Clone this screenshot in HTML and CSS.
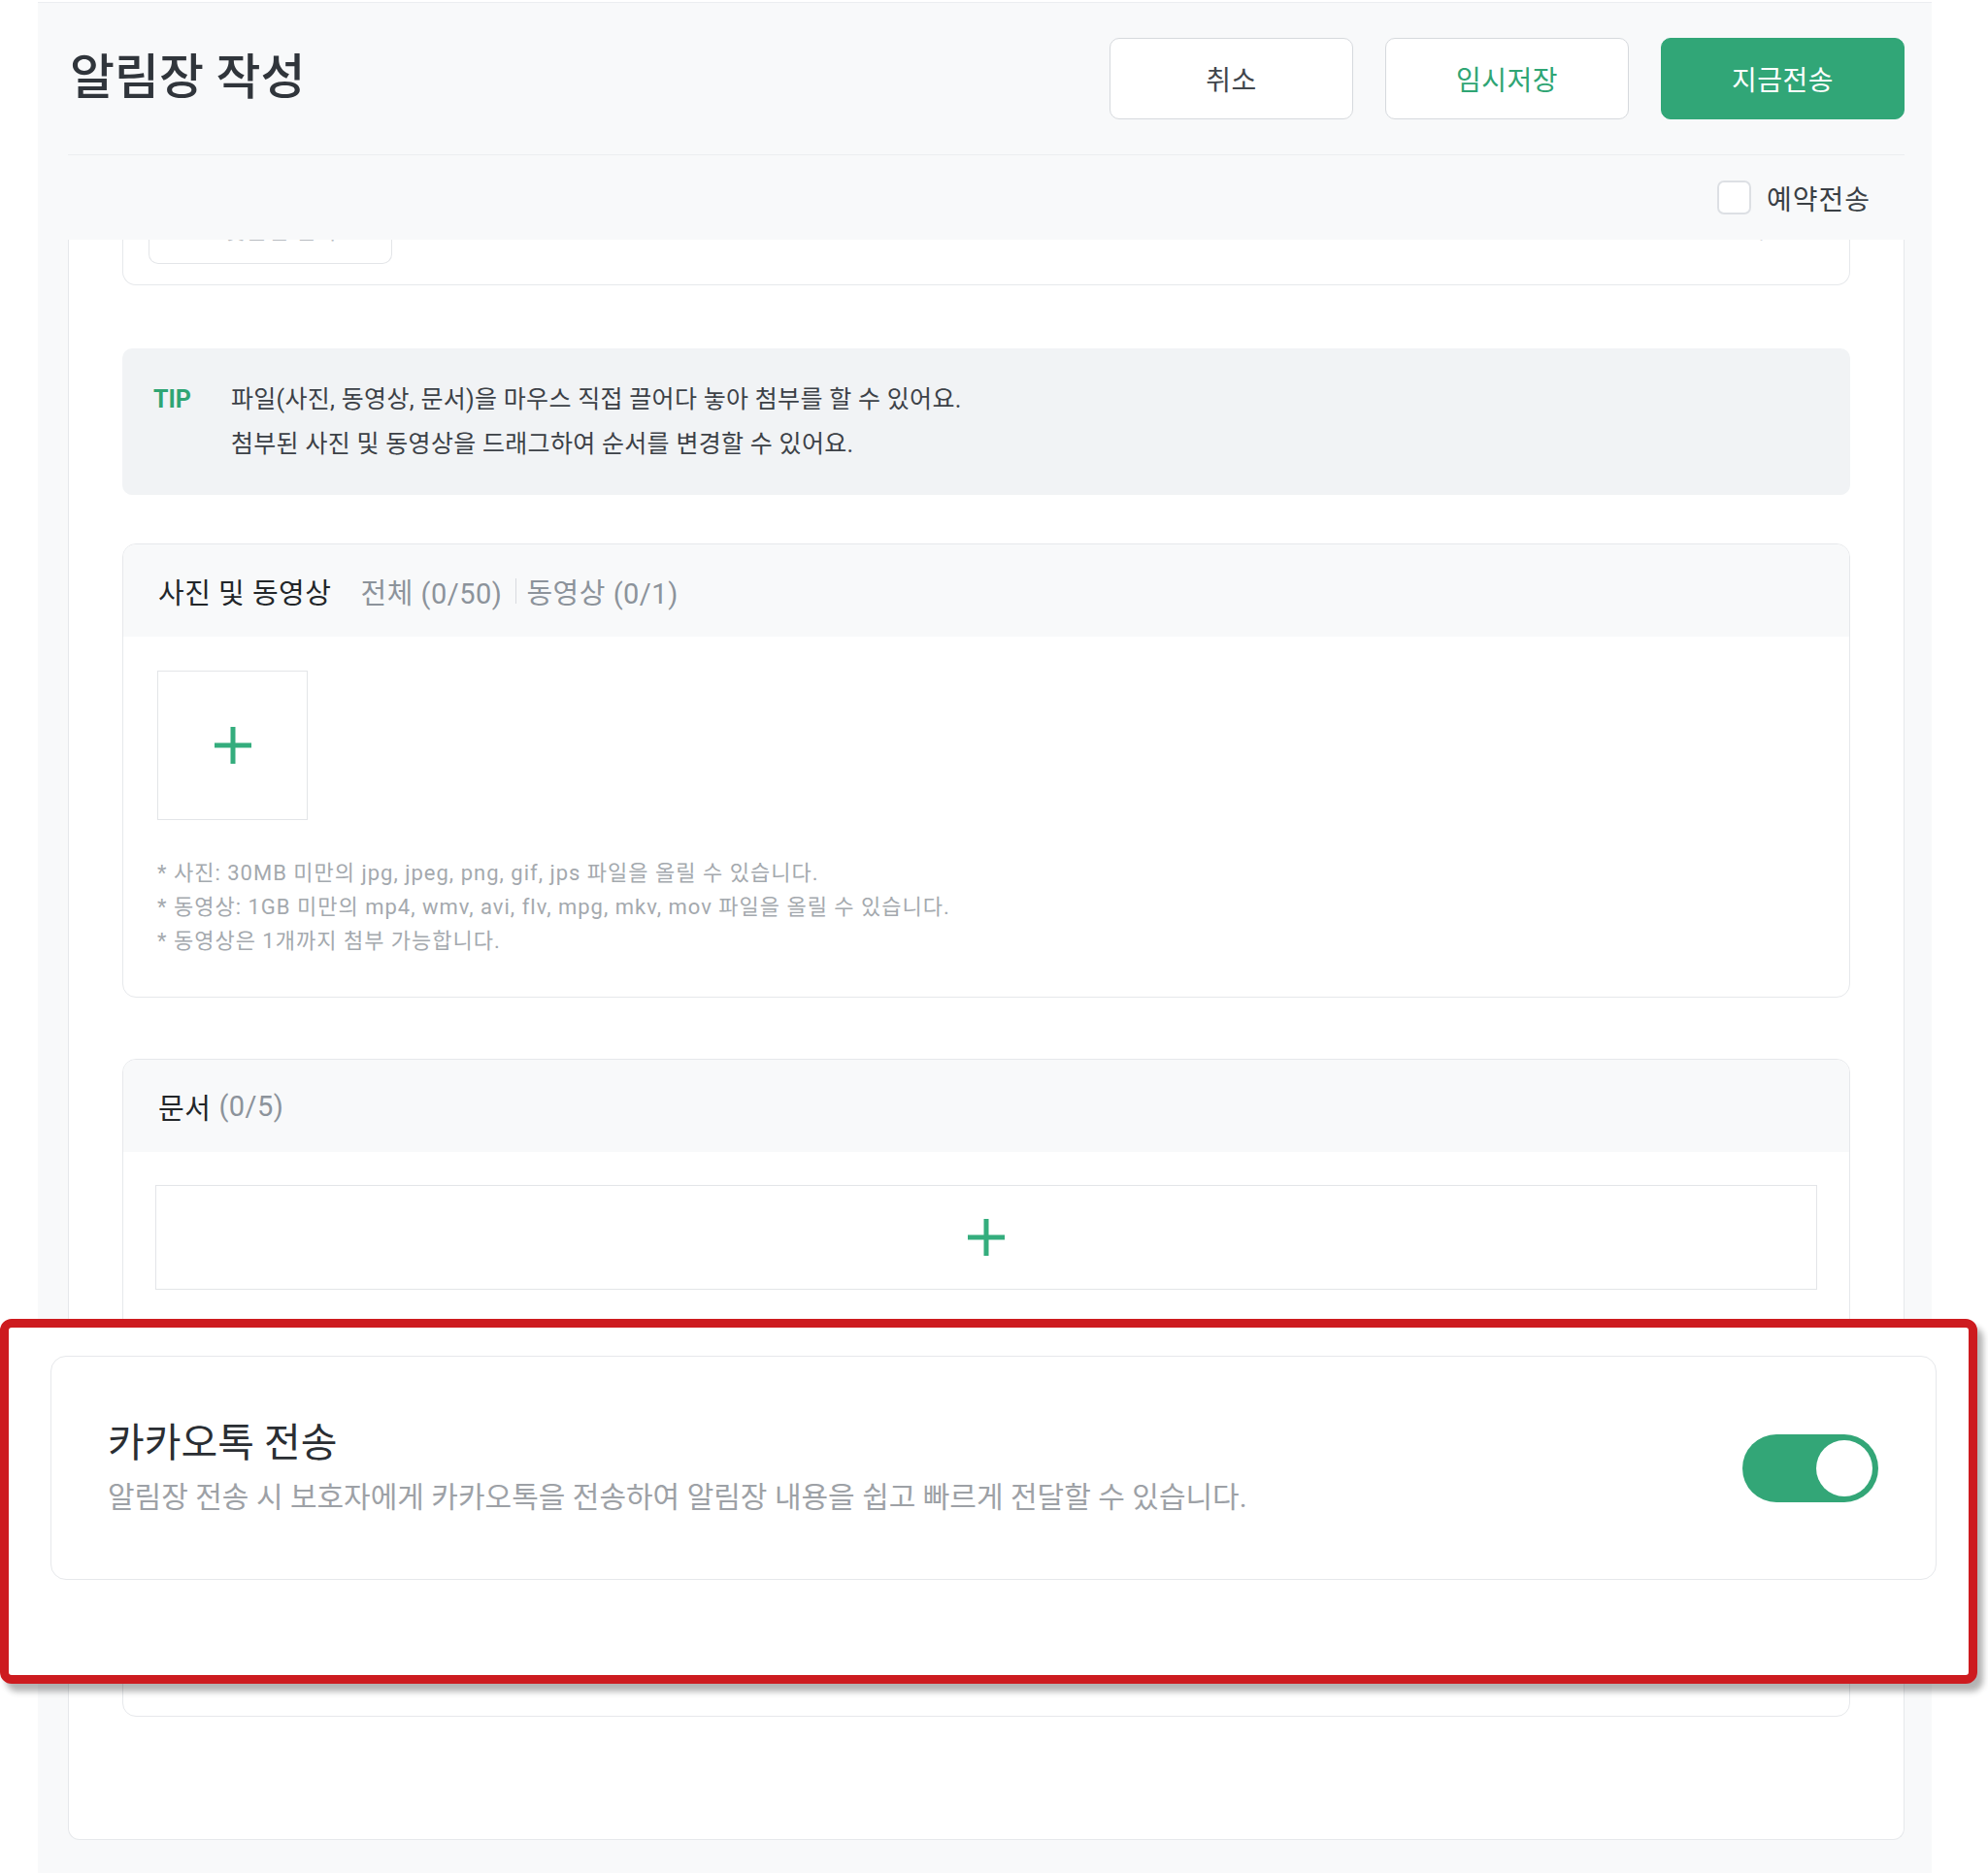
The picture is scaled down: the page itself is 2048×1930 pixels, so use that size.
FILE: index.html
```html
<!DOCTYPE html>
<html lang="ko">
<head>
  <meta charset="UTF-8">
  <title>알림장 작성</title>
  <link rel="stylesheet" href="styles.css">
</head>

<body>
  <div class="page">
    <header class="top">
      <div class="top-bar">
        <h1>알림장 작성</h1>
        <div class="actions">
          <button class="btn">취소</button>
          <button class="btn btn-save">임시저장</button>
          <button class="btn btn-send">지금전송</button>
        </div>
      </div>
      <div class="top-options">
        <label class="check">
          <input type="checkbox" id="reserve">
          <span class="box"></span>
          예약전송
        </label>
      </div>
    </header>

    <main class="content">
      <!-- 본문 입력 카드 (스크롤되어 아랫부분만 보임) -->
      <div class="card-tail">
        <span class="tail-btn"><span class="tail-text">✓ 맞춤법 검사</span></span>
        <span class="tail-count"><span class="tail-text">0/3000</span></span>
      </div>

      <div class="tip">
        <span class="tip-label">TIP</span>
        <div class="tip-text">
          <p>파일(사진, 동영상, 문서)을 마우스 직접 끌어다 놓아 첨부를 할 수 있어요.</p>
          <p>첨부된 사진 및 동영상을 드래그하여 순서를 변경할 수 있어요.</p>
        </div>
      </div>

      <section class="card">
        <div class="card-head">
          <span class="card-title">사진 및 동영상</span>
          <span class="count">전체 (0/50)</span>
          <span class="sep"></span>
          <span class="count">동영상 (0/1)</span>
        </div>
        <div class="card-body">
          <div class="tile">
            <svg width="42" height="42" viewBox="0 0 42 42"><path d="M21 2v38M2 21h38" stroke="#34ad7d" stroke-width="5" fill="none"/></svg>
          </div>
          <ul class="notes">
            <li>* 사진: 30MB 미만의 jpg, jpeg, png, gif, jps 파일을 올릴 수 있습니다.</li>
            <li>* 동영상: 1GB 미만의 mp4, wmv, avi, flv, mpg, mkv, mov 파일을 올릴 수 있습니다.</li>
            <li>* 동영상은 1개까지 첨부 가능합니다.</li>
          </ul>
        </div>
      </section>

      <section class="card docs">
        <div class="card-head">
          <span class="card-title">문서</span>
          <span class="count count-tight">(0/5)</span>
        </div>
        <div class="card-body">
          <div class="dropzone">
            <svg width="40" height="40" viewBox="0 0 40 40"><path d="M20 1v38M1 20h38" stroke="#34ad7d" stroke-width="5" fill="none"/></svg>
          </div>
        </div>
      </section>
    </main>

    <!-- 강조 표시된 카카오톡 전송 설정 -->
    <div class="highlight">
      <div class="kakao-card">
        <div class="kakao-text">
          <h2>카카오톡 전송</h2>
          <p>알림장 전송 시 보호자에게 카카오톡을 전송하여 알림장 내용을 쉽고 빠르게 전달할 수 있습니다.</p>
        </div>
        <label class="switch">
          <input type="checkbox" checked>
          <span class="knob"></span>
        </label>
      </div>
    </div>
  </div>
</body>
</html>
```

FILE: styles.css
```css
body {
  margin: 0;
  background-color: white;
  font-family: Roboto, "Noto Sans CJK KR", "Noto Sans", sans-serif;
  color: #2b2f34;
}

.page {
  margin: 2px 0 0 39px;
  width: 1951px;
  box-sizing: border-box;
  padding: 0 28px 34px 31px;
  background-color: #f8f9fa;
  border-top: 1px solid #eceef1;
}

/* 상단 제목 + 버튼 */
.top-bar {
  display: flex;
  align-items: center;
  justify-content: space-between;
  padding: 36px 0 36px 2px;
  border-bottom: 1px solid #eceef0;
}

h1 {
  margin: -2px 0 0;
  font-size: 50px;
  font-weight: 500;
  color: #30353b;
  line-height: 64px;
}

.actions {
  display: flex;
  gap: 33px;
}

.btn {
  width: 251px;
  height: 84px;
  border: 1px solid #d6d9dd;
  border-radius: 10px;
  background-color: white;
  font-family: inherit;
  font-size: 28px;
  letter-spacing: 0.5px;
  color: #41464c;
  cursor: pointer;
}

.btn-save {
  color: #2fa574;
}

.btn-send {
  background-color: #31a677;
  border-color: #31a677;
  color: white;
}

.top-options {
  height: 87px;
  display: flex;
  align-items: center;
  justify-content: flex-end;
  padding-right: 35px;
}

.check {
  display: flex;
  align-items: center;
  gap: 16px;
  font-size: 28px;
  letter-spacing: 1px;
  color: #3a3f45;
  cursor: pointer;
}

.check input,
.switch input {
  display: none;
}

.check .box {
  width: 31px;
  height: 31px;
  border: 2px solid #dde0e4;
  border-radius: 7px;
  background-color: white;
}

/* 흰색 본문 영역 */
.content {
  background-color: white;
  border: 1px solid #e6e8eb;
  border-top: none;
  border-radius: 0 0 12px 12px;
  padding: 0 55px 126px;
}

.card-tail {
  height: 46px;
  border: 1px solid #e6e8eb;
  border-top: none;
  border-radius: 0 0 14px 14px;
  display: flex;
  justify-content: space-between;
  align-items: flex-start;
  padding: 0 28px 0 26px;
}

.tail-btn {
  width: 249px;
  height: 24px;
  border: 1px solid #e3e5e8;
  border-top: none;
  border-radius: 0 0 10px 10px;
  overflow: hidden;
  display: flex;
  justify-content: center;
}

.tail-count {
  height: 5px;
  overflow: hidden;
}

.tail-text {
  display: block;
  margin-top: -26px;
  font-size: 24px;
  line-height: 34px;
  color: #b9bdc2;
}

.tip {
  margin-top: 65px;
  height: 151px;
  box-sizing: border-box;
  background-color: #f1f3f5;
  border-radius: 10px;
  padding: 30px 32px 0;
  display: flex;
  font-size: 25px;
  line-height: 46px;
  letter-spacing: 0.3px;
  color: #3c4147;
}

.tip-label {
  width: 80px;
  flex-shrink: 0;
  color: #2fa574;
  font-weight: bold;
  letter-spacing: 0;
}

.tip-text p {
  margin: 0;
}

.card {
  margin-top: 50px;
  border: 1px solid #e6e8eb;
  border-radius: 14px;
  overflow: hidden;
}

.card-head {
  height: 95px;
  background-color: #f8f9fa;
  display: flex;
  align-items: center;
  padding-left: 36px;
  font-size: 29px;
  letter-spacing: 0.5px;
}

.card-title {
  color: #222629;
  margin-right: 30px;
}

.count {
  color: #8c939b;
}

.count-tight {
  margin-left: -22px;
}

.sep {
  width: 1px;
  height: 26px;
  background-color: #d8dbdf;
  margin: 0 10px 0 14px;
}

.card-body {
  padding: 35px 35px 40px;
}

.tile {
  width: 153px;
  height: 152px;
  border: 1px solid #e3e5e8;
  display: flex;
  align-items: center;
  justify-content: center;
}

.notes {
  list-style: none;
  margin: 37px 0 0;
  padding: 0;
  font-size: 22px;
  line-height: 35px;
  letter-spacing: 1px;
  color: #a4a9ae;
}

.docs {
  margin-top: 63px;
}

.docs .card-body {
  padding: 34px 33px 439px;
}

.dropzone {
  height: 106px;
  border: 1px solid #e3e5e8;
  display: flex;
  align-items: center;
  justify-content: center;
}

/* 강조 박스 (다른 내용 위에 겹쳐 표시) */
.highlight {
  position: absolute;
  left: 0;
  top: 1359px;
  width: 2037px;
  height: 376px;
  box-sizing: border-box;
  border: 9px solid #cd1b1f;
  border-radius: 12px;
  background-color: white;
  box-shadow: 6px 8px 6px rgba(0, 0, 0, 0.3);
  padding: 29px 33px 0 43px;
}

.kakao-card {
  height: 231px;
  box-sizing: border-box;
  border: 1px solid #e6e8eb;
  border-radius: 16px;
  display: flex;
  align-items: center;
  justify-content: space-between;
  padding: 0 59px 0 58px;
}

.kakao-text h2 {
  margin: 0;
  font-size: 41px;
  font-weight: 400;
  line-height: 50px;
  color: #2a2e33;
}

.kakao-text p {
  margin: 11px 0 0;
  font-size: 30px;
  line-height: 40px;
  color: #9da1a6;
}

.switch {
  width: 140px;
  height: 70px;
  border-radius: 35px;
  background-color: #33a677;
  display: flex;
  align-items: center;
  justify-content: flex-end;
  padding: 0 6px;
  box-sizing: border-box;
  cursor: pointer;
}

.knob {
  width: 58px;
  height: 58px;
  border-radius: 50%;
  background-color: white;
}
```
